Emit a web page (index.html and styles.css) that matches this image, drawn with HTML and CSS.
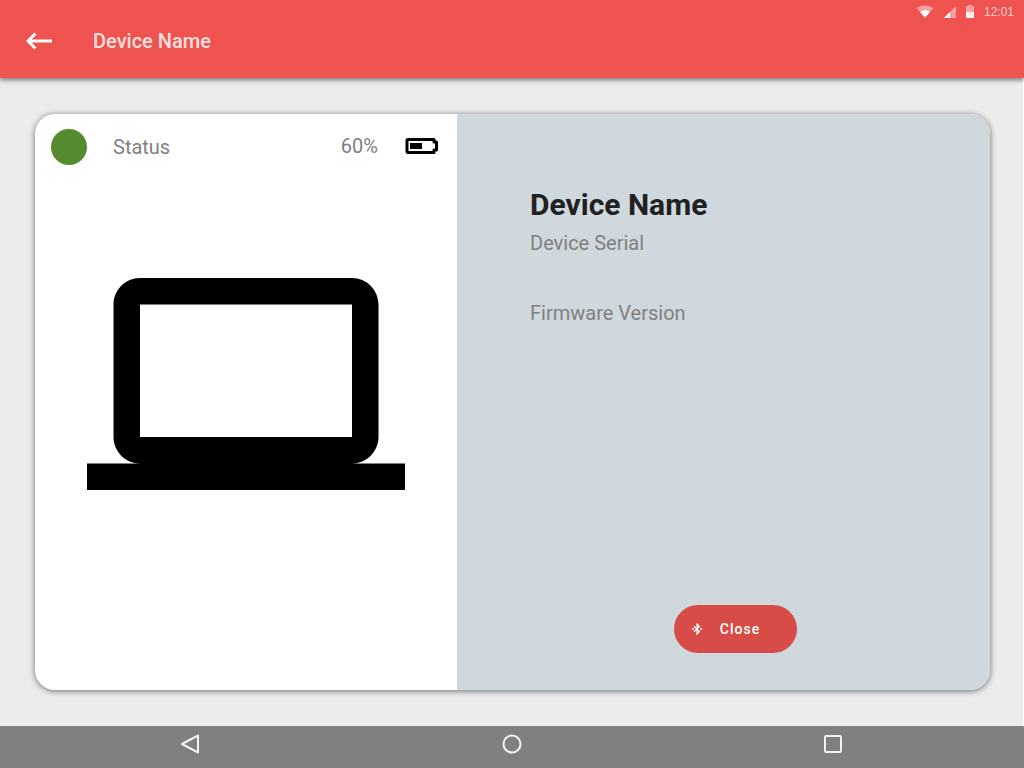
FILE: index.html
```html
<!DOCTYPE html>
<html lang="en">
<head>
<meta charset="utf-8">
<meta name="viewport" content="width=device-width, initial-scale=1">
<title>Device Name</title>
<link rel="stylesheet" href="styles.css">
</head>
<body>
<header class="app-bar">
  <button class="icon-button" type="button" aria-label="Back">
    <svg class="back-icon" viewBox="0 0 26 18" aria-hidden="true"><path d="M9.500 1.500 2 9l7.500 7.500M2.500 9H26" fill="none" stroke="currentColor" stroke-width="3"/></svg>
  </button>
  <h1 class="app-title">Device Name</h1>
  <div class="system-status">
    <svg class="wifi" viewBox="0 0 18 13" aria-hidden="true"><path d="M9 12.500.5 3C5.500-.4 12.500-.4 17.500 3z" fill="#fff" opacity=".45"/><path d="M9 12.500 4.200 7.200c2.600-2.500 7-2.500 9.600 0z" fill="#fff"/></svg>
    <svg class="signal" viewBox="0 0 12 12" aria-hidden="true"><path d="M0 12 12 0v12z" fill="#fff" opacity=".45"/><path d="M0 12l6-6v6z" fill="#fff"/></svg>
    <svg class="phone-battery" viewBox="0 0 8 13" aria-hidden="true"><path d="M2 0h4v1h2v6H0V1h2z" fill="#fff" opacity=".45"/><path d="M0 7h8v6H0z" fill="#fff" opacity=".92"/></svg>
    <time class="clock">12:01</time>
  </div>
</header>
<main class="content">
  <article class="card">
    <section class="preview">
      <div class="status-row">
        <span class="status-dot"></span>
        <span class="status-label">Status</span>
        <div class="power">
          <span>60%</span>
          <svg class="device-battery" viewBox="0 0 34 18" aria-hidden="true"><path d="M3 2.500h26v2.500h2.500v8H29v2.500H3q-1 0-1-1v-11q0-1 1-1z" fill="none" stroke="#000" stroke-width="3" stroke-linejoin="round"/><path d="M5 6h12v6H5z"/></svg>
        </div>
      </div>
      <div class="device-art">
        <svg class="laptop" viewBox="0 0 24 16" role="img" aria-label="Laptop"><path d="M20 14c1.100 0 2-.9 2-2V2c0-1.100-.9-2-2-2H4C2.900 0 2 .9 2 2v10c0 1.100.9 2 2 2H0v2h24v-2h-4zM4 2h16v10H4V2z"/></svg>
      </div>
    </section>
    <section class="details">
      <div class="device-info">
        <h2 class="device-name">Device Name</h2>
        <p class="serial">Device Serial</p>
        <p class="firmware">Firmware Version</p>
      </div>
      <button class="close-button" type="button">
        <svg class="bluetooth" viewBox="0 0 12 12" aria-hidden="true"><path d="M3 3.200 8.400 8.500 6 11V1l2.400 2.500L3 8.800" fill="none" stroke="currentColor" stroke-width="1.200"/><circle cx="1.800" cy="6" r="1"/><circle cx="10.200" cy="6" r="1"/></svg>
        Close
      </button>
    </section>
  </article>
</main>
<nav class="system-nav" aria-label="System">
  <button class="nav-button" type="button" aria-label="Back"><svg class="nav-icon" viewBox="0 0 20 20" aria-hidden="true"><path d="M17 1.500v17L1 10z"/></svg></button>
  <button class="nav-button" type="button" aria-label="Home"><svg class="nav-icon" viewBox="0 0 20 20" aria-hidden="true"><circle cx="10" cy="10" r="8.500"/></svg></button>
  <button class="nav-button" type="button" aria-label="Recent apps"><svg class="nav-icon" viewBox="0 0 20 20" aria-hidden="true"><rect x="2" y="2" width="16" height="16" rx="1"/></svg></button>
</nav>
</body>
</html>
```
FILE: styles.css
```css
* { box-sizing: border-box; }

body {
  margin: 0;
  min-height: 100vh;
  display: flex;
  flex-direction: column;
  background: #ececec;
  font-family: Roboto, "Liberation Sans", sans-serif;
  font-size: 20px;
  line-height: 24px;
  color: #808080;
}

h1, h2, p { margin: 0; }

svg { display: block; }

button {
  border: 0;
  padding: 0;
  background: none;
  color: #fff;
  font: inherit;
  cursor: pointer;
}

.app-bar {
  display: flex;
  align-items: center;
  min-height: 78px;
  padding: 4px 10px 0 26px;
  background: #ef5350;
  box-shadow: 0 2px 5px rgba(0, 0, 0, .5);
  z-index: 1;
}

.back-icon { width: 26px; height: 18px; }

.app-title {
  margin-left: 41px;
  font-size: 20px;
  font-weight: 500;
  line-height: 24px;
  color: #fde0df;
}

.system-status {
  display: flex;
  align-items: center;
  align-self: flex-start;
  gap: 10px;
  margin-left: auto;
}

.wifi { width: 18px; height: 13px; }
.signal { width: 12px; height: 12px; }
.phone-battery { width: 8px; height: 13px; }

.clock {
  font-family: "Liberation Sans", sans-serif;
  font-size: 12px;
  line-height: 14px;
  padding-top: 1px;
  color: #fbd0cf;
}

.content {
  flex: 1;
  display: flex;
  padding: 36px 33px 36px 35px;
  border-right: 1px solid #fff;
}

.card {
  flex: 1;
  display: grid;
  grid-template-columns: 422fr 533fr;
  border-radius: 20px;
  overflow: hidden;
  background: #fff;
  box-shadow: 0 1px 6px rgba(0, 0, 0, .55);
}

.preview {
  display: flex;
  flex-direction: column;
}

.status-row {
  display: flex;
  align-items: center;
  padding: 15px 18px 0 16px;
}

.status-dot {
  width: 36px;
  height: 36px;
  border-radius: 50%;
  background: #558b2f;
}

.status-label { margin-left: 26px; }

.power {
  display: flex;
  align-items: center;
  gap: 27px;
  margin-left: auto;
  padding-bottom: 3px;
}

.device-battery {
  width: 34px;
  height: 18px;
}

.device-art {
  flex: 1;
  display: flex;
  align-items: center;
  justify-content: center;
  padding-bottom: 87px;
}

.laptop {
  width: 318px;
  height: 212px;
}

.details {
  display: flex;
  flex-direction: column;
  justify-content: space-between;
  background: #cfd8dd;
  padding: 72px 24px 37px 73px;
}

.device-name {
  font-size: 30px;
  font-weight: 700;
  line-height: 38px;
  color: #212121;
}

.serial { margin-top: 7px; }

.firmware { margin-top: 46px; }

.close-button {
  align-self: center;
  display: flex;
  align-items: center;
  gap: 17px;
  height: 48px;
  margin-right: 25px;
  padding: 0 37px 0 17px;
  border-radius: 24px;
  background: #d84c48;
  font-size: 14px;
  font-weight: 500;
  letter-spacing: 1px;
}

.bluetooth {
  width: 12px;
  height: 12px;
  fill: currentColor;
}

.system-nav {
  display: flex;
  height: 42px;
  padding: 0 30px 6px;
  background: #808080;
}

.nav-button {
  flex: 1;
  display: flex;
  align-items: center;
  justify-content: center;
}

.nav-icon {
  width: 20px;
  height: 20px;
  fill: none;
  stroke: #f2f2f2;
  stroke-width: 2;
  stroke-linejoin: round;
}
```
